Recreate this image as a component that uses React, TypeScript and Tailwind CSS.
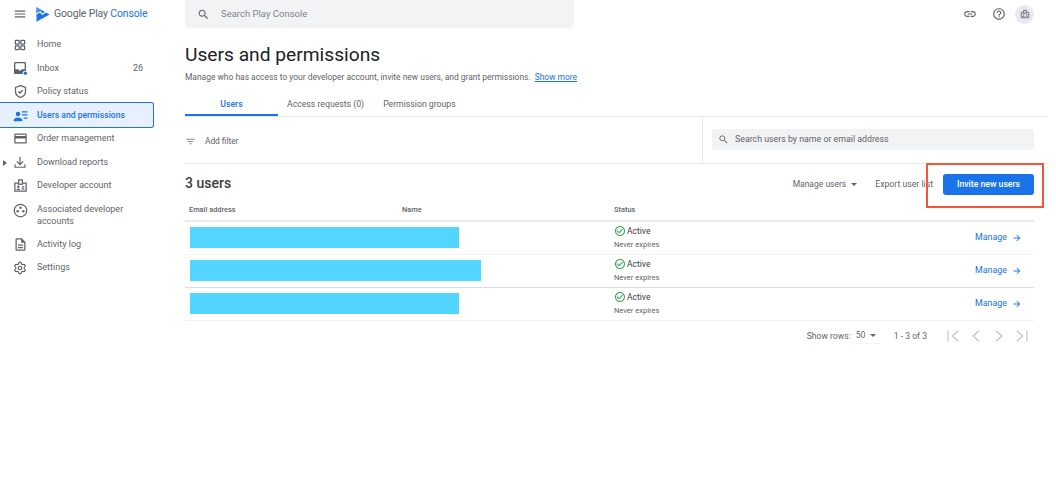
import { Settings } from "lucide-react";
import type { ReactNode } from "react";

function Icon({ d, className }: { d: string; className?: string }) {
	return (
		<svg viewBox="0 0 24 24" fill="currentColor" className={className}>
			<path d={d} />
		</svg>
	);
}

const paths = {
	menu: "M3 18h18v-2H3v2zm0-5h18v-2H3v2zm0-7v2h18V6H3z",
	search:
		"M15.5 14h-.79l-.28-.27C15.41 12.59 16 11.11 16 9.5 16 5.91 13.09 3 9.5 3S3 5.91 3 9.5 5.91 16 9.5 16c1.61 0 3.09-.59 4.23-1.57l.27.28v.79l5 4.99L20.49 19l-4.99-5zm-6 0C7.01 14 5 11.99 5 9.5S7.01 5 9.5 5 14 7.01 14 9.5 11.99 14 9.5 14z",
	link: "M3.9 12c0-1.71 1.39-3.1 3.1-3.1h4V7H7c-2.76 0-5 2.24-5 5s2.24 5 5 5h4v-1.9H7c-1.71 0-3.1-1.39-3.1-3.1zM8 13h8v-2H8v2zm9-6h-4v1.9h4c1.71 0 3.1 1.39 3.1 3.1s-1.39 3.1-3.1 3.1h-4V17h4c2.76 0 5-2.24 5-5s-2.24-5-5-5z",
	help: "M11 18h2v-2h-2v2zm1-16C6.48 2 2 6.48 2 12s4.48 10 10 10 10-4.48 10-10S17.52 2 12 2zm0 18c-4.41 0-8-3.59-8-8s3.59-8 8-8 8 3.59 8 8-3.59 8-8 8zm0-14c-2.21 0-4 1.79-4 4h2c0-1.1.9-2 2-2s2 .9 2 2c0 2-3 1.75-3 5h2c0-2.25 3-2.5 3-5 0-2.21-1.79-4-4-4z",
	card: "M20 4H4c-1.11 0-1.99.89-1.99 2L2 18c0 1.11.89 2 2 2h16c1.11 0 2-.89 2-2V6c0-1.11-.89-2-2-2zm0 14H4v-6h16v6zm0-10H4V6h16v2z",
	check:
		"M16.59 7.58L10 14.17l-3.59-3.58L5 12l5 5 8-8zM12 2C6.48 2 2 6.48 2 12s4.48 10 10 10 10-4.48 10-10S17.52 2 12 2zm0 18c-4.42 0-8-3.58-8-8s3.58-8 8-8 8 3.58 8 8-3.58 8-8 8z",
	arrow: "M12 4l-1.41 1.41L16.17 11H4v2h12.17l-5.58 5.59L12 20l8-8z",
	filter: "M10 18h4v-2h-4v2zM3 6v2h18V6H3zm3 7h12v-2H6v2z",
	inbox:
		"M19 3H5c-1.1 0-2 .9-2 2v14c0 1.1.9 2 2 2h14c1.1 0 2-.9 2-2V5c0-1.1-.9-2-2-2zm0 11h-4.99c0 1.1-.9 2-2 2s-2-.9-2-2H5V5h14v9z",
	log: "M14 2H6c-1.1 0-1.99.9-1.99 2L4 20c0 1.1.89 2 1.99 2H18c1.1 0 2-.9 2-2V8l-6-6zm4 18H6V4h7v5h5v11zM8 12h8v2H8zm0 4h8v2H8z",
};

function HomeIcon() {
	return (
		<svg viewBox="0 0 24 24" fill="none" stroke="currentColor" strokeWidth="2.2" className="w-[14px] h-[14px]">
			<rect x="4" y="4" width="6.5" height="6.5" rx="1" />
			<rect x="13.5" y="4" width="6.5" height="6.5" rx="1" />
			<rect x="4" y="13.5" width="6.5" height="6.5" rx="1" />
			<rect x="13.5" y="13.5" width="6.5" height="6.5" rx="1" />
		</svg>
	);
}

function InboxIcon() {
	return (
		<svg viewBox="0 0 24 24" className="w-[16px] h-[16px]">
			<path fill="#5f6368" d={paths.inbox} />
			<circle cx="20" cy="20" r="4" fill="#fff" />
			<circle cx="20" cy="20" r="2.6" fill="#1a73e8" />
		</svg>
	);
}

function ShieldIcon() {
	return (
		<svg viewBox="0 0 24 24" fill="none" stroke="currentColor" strokeWidth="2" className="w-[15px] h-[15px]">
			<path d="M12 2.5l8 3v6c0 5-3.4 8.7-8 10-4.6-1.3-8-5-8-10v-6z" />
			<path d="M8.5 12l2.5 2.5 4.5-4.5" />
		</svg>
	);
}

function UsersIcon() {
	return (
		<svg viewBox="0 0 24 24" fill="#1a73e8" className="w-[15px] h-[15px]">
			<circle cx="8" cy="9.5" r="3.6" />
			<path d="M1 20c0-3.4 4-5 7-5s7 1.6 7 5v1H1z" />
			<path d="M14 5h9v2h-9zM14 10h9v2h-9zM17 15h6v2h-6z" />
		</svg>
	);
}

function DownloadIcon() {
	return (
		<svg viewBox="0 0 24 24" fill="none" stroke="currentColor" strokeWidth="2" className="w-[14px] h-[14px]">
			<path d="M12 3v13M6.5 11l5.5 5.5 5.5-5.5M3.5 16v5h17v-5" />
		</svg>
	);
}

function BadgeIcon({ className }: { className: string }) {
	return (
		<svg viewBox="0 0 24 24" fill="none" stroke="currentColor" strokeWidth="2" className={className}>
			<path d="M9 8H3v13h18V8h-6" />
			<rect x="9" y="3" width="6" height="7" />
			<circle cx="8.5" cy="14" r="1" />
			<path d="M6 18h5M14 14h4M14 17.5h4" />
		</svg>
	);
}

function AssociatedIcon() {
	return (
		<svg viewBox="0 0 24 24" className="w-[15px] h-[15px]">
			<circle cx="12" cy="12" r="10" fill="none" stroke="currentColor" strokeWidth="2" />
			<circle cx="12" cy="7.5" r="2" fill="currentColor" />
			<circle cx="7.5" cy="13" r="2" fill="currentColor" />
			<circle cx="16.5" cy="13" r="2" fill="currentColor" />
		</svg>
	);
}

function Logo() {
	return (
		<svg viewBox="0 0 28 30" className="w-[14px] h-[15px]">
			<path d="M1 0.5L27 15 1 29.5z" fill="#1a73e8" />
			<path d="M1 14l7-5 5 5.5 6-4" fill="none" stroke="#fff" strokeWidth="2.5" />
			<path d="M1 0.5L13 7.2 1 12z" fill="#4d94ef" />
		</svg>
	);
}

// thin stroked pager arrows, the material ones are too heavy at this size
function PageIcon({ d }: { d: string }) {
	return (
		<svg viewBox="0 0 24 24" fill="none" stroke="currentColor" strokeWidth="1.5" className="w-[18px] h-[18px]">
			<path d={d} />
		</svg>
	);
}

function NavItem({
	icon,
	label,
	count,
	active,
	caret,
}: {
	icon: ReactNode;
	label: string;
	count?: string;
	active?: boolean;
	caret?: boolean;
}) {
	return (
		<div
			className={`relative flex items-center pl-[12px] ${
				active
					? "h-[26px] my-[-1.25px] border border-[#1a73e8] border-l-0 rounded-r-[3px] bg-[#e8f0fe] text-[8.6px] text-[#1a73e8] font-medium"
					: "h-[23.5px] text-[9px] text-[#5f6368]"
			}`}
		>
			{caret && (
				<span className="absolute left-[3px] top-[9px] border-y-[3px] border-y-transparent border-l-[4px] border-l-[#5f6368]" />
			)}
			<span className={`flex items-center justify-center w-[16px] mr-[9px] ${active ? "text-[#1a73e8]" : "text-[#5f6368]"}`}>
				{icon}
			</span>
			<span className="flex-1">{label}</span>
			{count && <span className="mr-[11px]">{count}</span>}
		</div>
	);
}

function Sidebar() {
	return (
		<aside className="w-[154px] shrink-0 pt-[5px]">
			<NavItem icon={<HomeIcon />} label="Home" />
			<NavItem icon={<InboxIcon />} label="Inbox" count="26" />
			<NavItem icon={<ShieldIcon />} label="Policy status" />
			<NavItem icon={<UsersIcon />} label="Users and permissions" active />
			<NavItem icon={<Icon d={paths.card} className="w-[15px] h-[15px]" />} label="Order management" />
			<NavItem icon={<DownloadIcon />} label="Download reports" caret />
			<NavItem icon={<BadgeIcon className="w-[15px] h-[15px]" />} label="Developer account" />
			<div className="flex pl-[12px] pt-[5px] h-[35px] text-[9px] leading-[12px] text-[#5f6368]">
				<span className="flex justify-center w-[16px] mr-[9px]">
					<AssociatedIcon />
				</span>
				<span>
					Associated developer
					<br />
					accounts
				</span>
			</div>
			<NavItem icon={<Icon d={paths.log} className="w-[15px] h-[15px]" />} label="Activity log" />
			<NavItem icon={<Settings className="w-[14px] h-[14px]" strokeWidth={2} />} label="Settings" />
		</aside>
	);
}

function UserRow({ width, border }: { width: string; border: string }) {
	return (
		<div className={`grid grid-cols-[429px_1fr_auto] items-center h-[33px] border-b ${border}`}>
			<div className={`ml-[5px] -mt-[1px] h-[21px] bg-[#52d5ff] ${width}`} />
			<div className="-mt-[1px]">
				<div className="flex items-center text-[8.5px] leading-[12px] text-[#3c4043]">
					<Icon d={paths.check} className="w-[12px] h-[12px] mr-[1px] text-[#34a853]" />
					Active
				</div>
				<div className="mt-[2px] text-[7.5px] leading-[11px] text-[#5f6368]">Never expires</div>
			</div>
			<div className="flex items-center text-[8.9px] text-[#1a73e8]">
				Manage
				<Icon d={paths.arrow} className="w-[10px] h-[10px] ml-[5px] mr-[12px]" />
			</div>
		</div>
	);
}

export default function App() {
	return (
		<div className="relative w-[1056px] h-[498px] overflow-hidden bg-white font-['Roboto',sans-serif]">
			<header className="flex h-[28px]">
				<div className="flex items-center w-[185px] pl-[13px]">
					<Icon d={paths.menu} className="w-[14px] h-[14px] text-[#5f6368]" />
					<span className="ml-[9px]">
						<Logo />
					</span>
					<span className="ml-[4px] text-[10.5px] text-[#5f6368] tracking-[-0.15px]">
						Google Play <span className="text-[#1a73e8]">Console</span>
					</span>
				</div>
				<div className="flex items-center w-[389px] rounded-b-[5px] bg-[#f1f3f4] pl-[12px]">
					<Icon d={paths.search} className="w-[13px] h-[13px] text-[#5f6368]" />
					<span className="ml-[11px] text-[9.5px] text-[#80868b]">Search Play Console</span>
				</div>
				<div className="flex flex-1 items-center justify-end pr-[22px] text-[#5f6368]">
					<Icon d={paths.link} className="w-[14px] h-[14px] mr-[15px]" />
					<Icon d={paths.help} className="w-[14px] h-[14px] mr-[9px]" />
					<span className="flex items-center justify-center w-[19px] h-[19px] rounded-full bg-[#e8eaed]">
						<BadgeIcon className="w-[10px] h-[10px]" />
					</span>
				</div>
			</header>

			<div className="flex">
				<Sidebar />
				<main className="flex-1 ml-[31px] mr-[8px]">
					<h1 className="mt-[15px] text-[19.2px] leading-[24px] text-[#202124]">Users and permissions</h1>
					<p className="mt-[4px] text-[8.45px] leading-[12px] text-[#5f6368]">
						Manage who has access to your developer account, invite new users, and grant permissions.
						<span className="ml-[4px] text-[#1a73e8] underline">Show more</span>
					</p>

					<div className="flex h-[34px] border-b border-[#e8eaed] text-[8.7px] text-[#5f6368]">
						<div className="flex justify-center w-[93px] h-[33px] pt-[15px] border-b-2 border-[#1a73e8] font-medium text-[#1a73e8]">
							Users
						</div>
						<div className="ml-[9px] pt-[15px]">Access requests (0)</div>
						<div className="ml-[19px] pt-[15px]">Permission groups</div>
					</div>

					<div className="flex h-[47px] border-b border-[#e8eaed]">
						<div className="flex items-center w-[518px] pt-[2px] border-r border-[#e8eaed] text-[8.3px] text-[#5f6368]">
							<Icon d={paths.filter} className="w-[11px] h-[11px] text-[#80868b]" />
							<span className="ml-[9px]">Add filter</span>
						</div>
						<div className="flex items-center flex-1 pl-[9px] pr-[14px] pb-[1px]">
							<div className="flex items-center w-full h-[21px] rounded-[3px] bg-[#f1f3f4] pl-[6px] text-[8.8px] text-[#5f6368]">
								<Icon d={paths.search} className="w-[11px] h-[11px]" />
								<span className="ml-[6px]">Search users by name or email address</span>
							</div>
						</div>
					</div>

					<div className="mr-[14px]">
						<div className="flex items-center h-[21px] mt-[10px]">
							<h2 className="flex-1 -mt-[3px] text-[14px] font-medium text-[#3c4043]">3 users</h2>
							<span className="flex items-center text-[8.5px] text-[#5f6368]">
								Manage users
								<span className="ml-[5px] border-x-[3px] border-x-transparent border-t-[3px] border-t-[#5f6368]" />
							</span>
							<span className="ml-[18px] text-[8.7px] text-[#5f6368]">Export user list</span>
							<span className="flex items-center justify-center w-[91px] h-[21px] ml-[10px] rounded-[3px] bg-[#1a73e8] text-[8.7px] font-medium text-white">
								Invite new users
							</span>
						</div>

						<div className="grid grid-cols-[217px_212px_1fr] items-center h-[24px] mt-[3px] pt-[1px] pl-[4px] border-b-2 border-[#e8eaed] text-[7.4px] font-medium text-[#5f6368]">
							<span>Email address</span>
							<span className="-ml-[4px]">Name</span>
							<span className="-ml-[4px]">Status</span>
						</div>
						<UserRow width="w-[269px]" border="border-[#f1f3f4]" />
						<UserRow width="w-[291px]" border="border-[#dadce0]" />
						<UserRow width="w-[269px]" border="border-[#f1f3f4]" />

						<div className="flex items-center justify-end h-[30px] text-[8.6px] text-[#5f6368]">
							<span>Show rows:</span>
							<span className="flex items-center w-[24px] h-[16px] ml-[5px] border-b border-[#f1f3f4]">
								50
								<span className="ml-[5px] border-x-[3px] border-x-transparent border-t-[3px] border-t-[#5f6368]" />
							</span>
							<span className="ml-[14px]">1 - 3 of 3</span>
							<span className="flex items-center ml-[17px] mr-[3px] gap-[5px] text-[#bdc1c6]">
								<PageIcon d="M5.5 5v14M19 5l-8 7 8 7" />
								<PageIcon d="M16 5l-8 7 8 7" />
								<PageIcon d="M8 5l8 7-8 7" />
								<PageIcon d="M5 5l8 7-8 7M18.5 5v14" />
							</span>
						</div>
					</div>
				</main>
			</div>

			{/* red annotation round the invite button */}
			<div className="absolute left-[926px] top-[163px] w-[118px] h-[45px] border-2 border-[#f4553b]" />
		</div>
	);
}
